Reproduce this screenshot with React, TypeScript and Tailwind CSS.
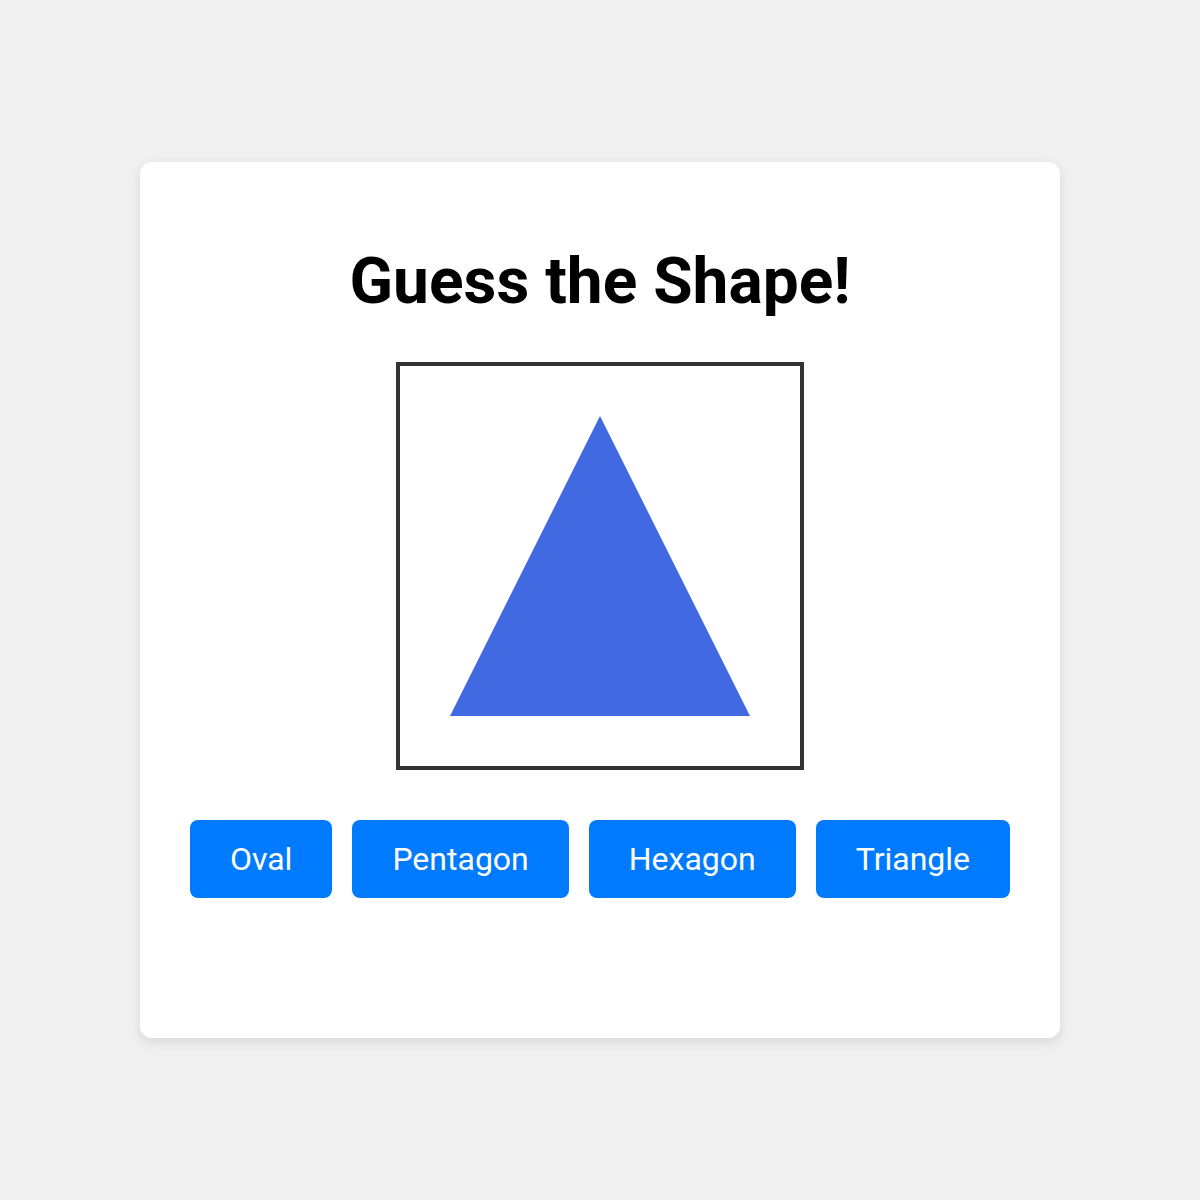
const options = ["Oval", "Pentagon", "Hexagon", "Triangle"];

export default function App() {
  return (
    <div className="flex min-h-[1200px] items-center justify-center bg-[#f0f0f0] font-['Roboto',sans-serif]">
      <div className="flex w-[920px] flex-col items-center rounded-xl bg-white pt-[80px] pb-[140px] shadow-[0_4px_12px_rgba(0,0,0,0.1)]">
        <h1 className="text-[64px] font-bold leading-[80px] text-black">Guess the Shape!</h1>

        <div className="mt-10 flex h-[408px] w-[408px] items-center justify-center border-4 border-[#333]">
          <svg width="300" height="300" viewBox="0 0 300 300">
            <polygon points="150,0 300,300 0,300" fill="#4169e1" />
          </svg>
        </div>

        <div className="mt-[50px] flex gap-5">
          {options.map((o) => (
            <button
              key={o}
              className="rounded-lg bg-[#007bff] px-10 py-5 text-[32px] leading-[38px] text-white"
            >
              {o}
            </button>
          ))}
        </div>
      </div>
    </div>
  );
}
